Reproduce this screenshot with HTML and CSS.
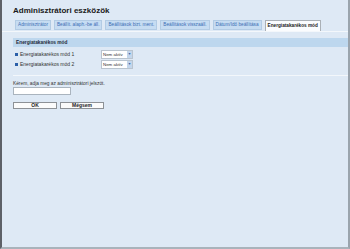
FILE: index.html
```html
<!DOCTYPE html>
<html lang="hu">
<head>
    <meta charset="UTF-8">
    <title>Adminisztrátori eszközök</title>
    <link rel="stylesheet" href="styles.css">
</head>
<body>
    <div class="frame">
        <h1 class="title">Adminisztrátori eszközök</h1>

        <!-- Tabs -->
        <div class="tabs">
            <span class="tab">Adminisztrátor</span>
            <span class="tab">Beállít. alaph.-be áll.</span>
            <span class="tab">Beállítások bizt. ment.</span>
            <span class="tab">Beállítások visszaáll.</span>
            <span class="tab">Dátum/Idő beállítása</span>
            <span class="tab active">Energiatakarékos mód</span>
        </div>

        <div class="content">
            <div class="section-head">Energiatakarékos mód</div>

            <div class="row">
                <span class="label"><span class="bullet"></span>Energiatakarékos mód 1</span>
                <span class="select">Nem aktív <span class="arrow">&#9660;</span></span>
            </div>
            <div class="row">
                <span class="label"><span class="bullet"></span>Energiatakarékos mód 2</span>
                <span class="select">Nem aktív <span class="arrow">&#9660;</span></span>
            </div>

            <div class="sep"></div>

            <div class="prompt">Kérem, adja meg az adminisztrátori jelszót.</div>
            <div class="pwd"></div>

            <div class="buttons">
                <button class="btn">OK</button>
                <button class="btn">Mégsem</button>
            </div>
        </div>
    </div>
</body>
</html>
```

FILE: styles.css
```css
html, body {
    margin: 0;
    padding: 0;
    height: 100%;
}

body {
    font-family: "Liberation Sans", Arial, sans-serif;
    background-color: #dee9f5;
}

.frame {
    box-sizing: border-box;
    height: 249px;
    border-left: 2px solid #5d6168;
    border-right: 2px solid #9aa4ad;
    border-bottom: 2px solid #a9b3bb;
    padding-top: 4px;
}

.title {
    margin: 0 0 0 11px;
    font-size: 8px;
    font-weight: bold;
    color: #1a1a1a;
    height: 13px;
    line-height: 13px;
}

.tabs {
    display: flex;
    align-items: flex-end;
    gap: 3px;
    padding-left: 13px;
    margin-top: 2px;
    height: 12px;
    border-bottom: 1px solid #f3f7fb;
}

.tab {
    font-size: 4.7px;
    color: #3a6db4;
    background-color: #c6dcf2;
    border: 1px solid #b2cbe4;
    height: 8px;
    line-height: 8px;
    padding: 0 2px;
    margin-bottom: 1px;
    white-space: nowrap;
}

.tab.active {
    color: #222;
    font-weight: bold;
    background-color: #fafcfe;
    border: 1px solid #aab0b6;
    border-bottom: none;
    height: 10px;
    line-height: 10px;
    margin-bottom: 0;
}

.content {
    padding-left: 11px;
    padding-top: 6px;
}

.section-head {
    background-color: #bdd7ee;
    font-size: 4.8px;
    font-weight: bold;
    color: #1e2a3a;
    height: 9px;
    line-height: 9px;
    padding-left: 3px;
    margin-bottom: 2px;
}

.row {
    display: flex;
    align-items: center;
    height: 10px;
    padding-left: 2px;
}

.label {
    width: 86px;
    font-size: 5px;
    color: #333;
    display: flex;
    align-items: center;
}

.bullet {
    width: 3px;
    height: 3px;
    background-color: #2b5fa8;
    margin-right: 2px;
}

.select {
    font-size: 4.4px;
    color: #333;
    background-color: #fff;
    border: 1px solid #b9c4cf;
    height: 7px;
    line-height: 7px;
    width: 29px;
    padding-left: 1px;
    display: flex;
    justify-content: space-between;
}

.arrow {
    background-color: #c3d6ec;
    color: #3f68a8;
    font-size: 3.5px;
    width: 5px;
    text-align: center;
}

.sep {
    height: 1px;
    background-color: #f3f7fb;
    margin-top: 6px;
}

.prompt {
    font-size: 4.8px;
    color: #333;
    margin-top: 5px;
    height: 6px;
    line-height: 6px;
}

.pwd {
    width: 56px;
    height: 6px;
    background-color: #fff;
    border: 1px solid #aab4be;
}

.buttons {
    display: flex;
    gap: 3px;
    margin-top: 7px;
}

.btn {
    width: 44px;
    height: 7px;
    padding: 0;
    font-family: "Liberation Sans", Arial, sans-serif;
    font-size: 5px;
    font-weight: bold;
    line-height: 5px;
    color: #222;
    background-color: #fbfbfb;
    border: 1px solid #8d9196;
    border-radius: 0;
}
```
